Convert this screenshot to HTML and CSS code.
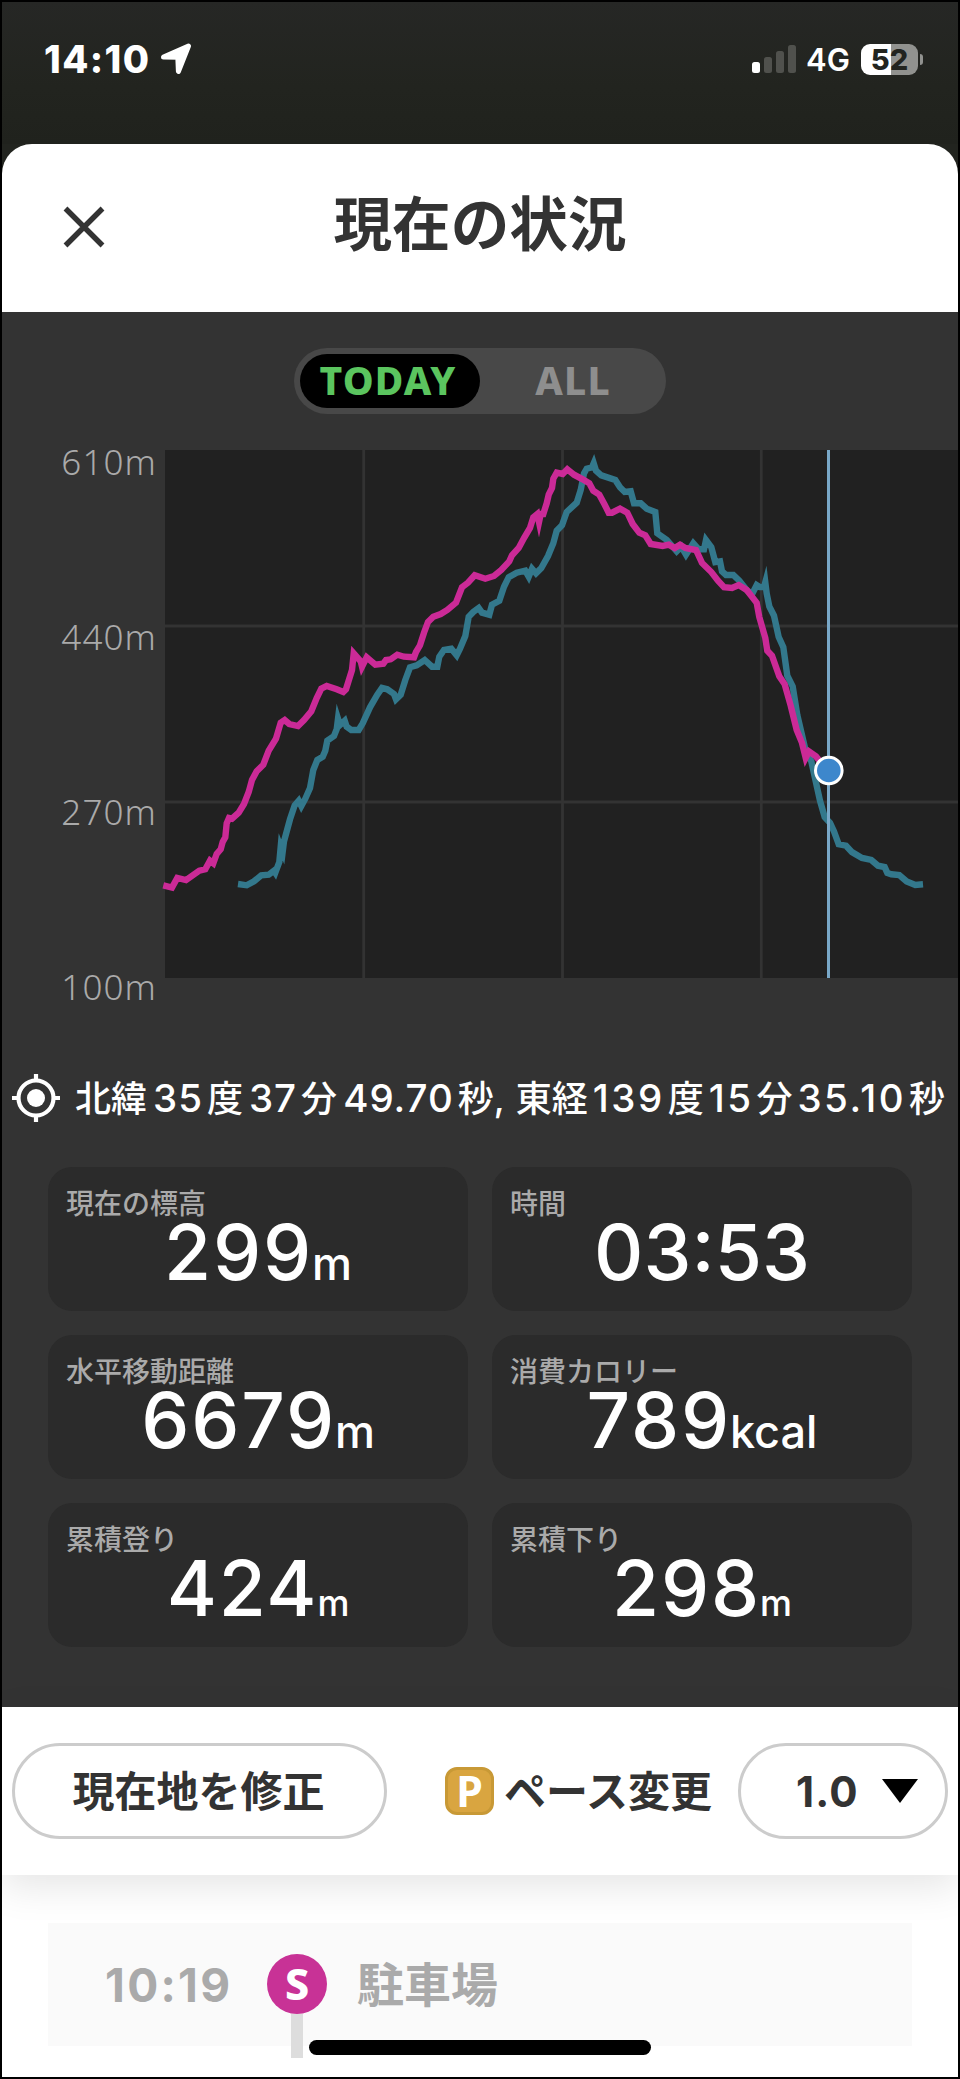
FILE: index.html
```
<!DOCTYPE html>
<html lang="ja">

<head>
    <meta charset="UTF-8" />
    <meta name="viewport" content="width=device-width, initial-scale=1.0" />
    <title>現在の状況</title>
    <link rel="stylesheet" href="styles.css">
</head>

<body>
    <div class="phone">
        <div class="status-bar">
            <span class="clock">14:10</span>
            <svg class="location" width="34" height="34" viewBox="0 0 34 34">
                <path d="M29.5 4 L19.4 29.5 L18.8 15.2 L4.5 15 Z" fill="#fff" stroke="#fff" stroke-width="5" stroke-linejoin="round" />
            </svg>
            <svg class="signal" width="44" height="28" viewBox="0 0 44 28">
                <rect x="0" y="17" width="8" height="11" rx="2.5" fill="#fff" />
                <rect x="12" y="12" width="8" height="16" rx="2.5" fill="#50514d" />
                <rect x="24" y="6" width="8" height="22" rx="2.5" fill="#50514d" />
                <rect x="36" y="0" width="8" height="28" rx="2.5" fill="#50514d" />
            </svg>
            <span class="network">4G</span>
            <div class="battery">52</div>
            <div class="battery-tip"></div>
        </div>

        <div class="sheet">
            <header class="header">
                <svg class="close" width="42" height="42" viewBox="0 0 42 42">
                    <path d="M2.5 2.5 L39.5 39.5 M39.5 2.5 L2.5 39.5" stroke="#333" stroke-width="5.4" fill="none" />
                </svg>
                <h1 class="title">現在の状況</h1>
            </header>

            <main class="panel">
                <div class="toggle">
                    <span class="toggle-item active">TODAY</span>
                    <span class="toggle-item">ALL</span>
                </div>

                <div class="chart">
                    <div class="axis">
                        <span>610m</span>
                        <span>440m</span>
                        <span>270m</span>
                        <span>100m</span>
                    </div>
                    <svg class="plot" width="793" height="528" viewBox="0 0 793 528">
                        <rect width="793" height="528" fill="#212121" />
                        <path d="M0 176 H793 M0 352 H793 M198.7 0 V528 M397.5 0 V528 M596.3 0 V528" stroke="#333" stroke-width="2.8" fill="none" />
                        <!-- planned route -->
                        <polyline class="line plan" points="73,434 81.7,435.3 89,431.3 96.3,425.3 103.7,424.7 109,420.7 110.3,422.7 114.3,412 115.7,396.7 117.7,401.7 119,391.3 125,369.3 129.7,355.3 133.7,350.7 136.3,356 140.3,348.7 145,338 148.3,320 152.3,310 157.7,306.7 160.3,300.7 162.3,290.7 169,286 171.7,279.3 173,268.7 175,275 179.7,270.7 181.7,276.7 186.3,280 193.7,280 197.7,273.3 205,257.3 212.3,244.7 217,238 222.3,239.3 229,244 231,249.3 235.7,244.7 240.3,230 245,217.3 251.7,215.3 259.7,210 267,216.7 272.3,216.7 274.3,206.7 279,200 286.3,198.7 291.7,205.3 295,198.7 300.3,186 303.7,166.7 308.3,162 313.7,158 317,162.7 324.3,164.7 327,154.7 334.3,150.7 339,136.7 343.7,127.3 351.7,122.7 360.3,120.7 363.7,126.7 367,118.7 371,123.3 376.3,118 383,106 388.3,93.3 391.7,80.7 397,75.3 401.7,62 411.7,52.7 415.7,40 419,23.3 421.7,18.7 427,17.3 428.7,13.3 431,20.7 436.3,25.3 450.3,30 455,37.3 459.7,42 465.7,41.3 469,53.3 475.7,53.3 481.7,58.7 490.3,62 492.3,83.3 501.7,90 511.7,101.3 516.3,96.7 521,104.7 528.3,93.3 533.7,99.3 539,99.3 541,90 546.3,97.1 550.3,112.1 555,111.4 557,121.4 561,125 568.3,125 574.3,130.7 581.7,140 587,144.3 591.7,135 595,137.1 599,137.1 600.3,132.3 601.7,143.6 604.3,156.4 609,165.7 613.7,187.1 618.3,197.1 622.3,225.7 627.7,236.4 632.3,265 640.3,299.3 646.3,311.4 655,350.7 659.7,367.1 665,372.9 669,381.4 673.7,394.3 681,395.7 687,402.1 697,407.9 706.3,410 713,415.7 719.7,417.1 722.3,422.9 726.3,424.3 734.3,425 741.7,431.4 750.3,435 758,434.3" />
                        <!-- walked today -->
                        <polyline class="line walked" points="-1.7,435.3 7,437.5 12.3,428 21,430 34.3,420.7 40.3,419.3 45,410.7 48.3,413.3 51.7,404 55.7,399.3 57.7,392 60.3,387.3 61.7,373.3 64,368 67,368.7 73.7,362.7 79,354 83.7,342 87,330 91.7,321.3 98.3,314.7 103.7,300.7 111,288.7 115.7,272.7 119.7,270 124.3,274 133,276 139,270 146.3,261.3 151.7,248 156.3,238.7 161.7,236 171.7,239.3 178.3,242 181,239.3 187,220 188.7,203.3 195.7,211.3 197,216.7 201.7,207.3 210.3,214.7 218.3,213.7 221,210 225.7,209.3 232.3,204.7 239,206.7 249,207.3 251,202 255,195.3 259,182.7 263,172 268.3,166.7 275.7,164 282.3,160 291,152.7 297,137.3 303,132.7 309.7,125.3 320.3,128.7 329,126 336.3,120 344.3,111.3 347,105.3 353.7,98 359,88 365,78 368.3,67.3 372.3,64 374,72 375.7,64 378.3,64 381.7,53.3 383.7,44.7 387,38 388.3,28.7 391.7,22.7 397.7,24 402.3,19.3 409,24.7 417.7,29.3 424.3,33.3 428.3,40.7 434.3,44.7 439.7,54.7 443.7,62.7 447,62.7 455,58.7 462.3,62.7 467.7,74 474.3,82.7 480.3,85.3 485.7,94 497.7,96 503.7,94.7 509.7,98 515,94.7 520.3,98 531,100 537,112.9 546.3,122.1 553,130.7 559,137.1 567,137.9 573.7,135 581.7,140 591.7,152.9 594.3,167.1 600.3,187.9 602.3,200.7 607,205.7 614.3,226.4 619.7,234.3 625.7,255.7 631.7,280 637,292.9 640.7,307.9 644,301.4 651,306.4 658.3,315.7" />
                        <path d="M663.5 0 V528" stroke="#79a8c8" stroke-width="3" />
                        <circle cx="663.8" cy="320.5" r="13.3" fill="#3d87cc" stroke="#fff" stroke-width="3" />
                    </svg>
                </div>

                <div class="position">
                    <svg class="target" width="48" height="48" viewBox="0 0 48 48">
                        <circle cx="24" cy="24" r="17.5" fill="none" stroke="#fff" stroke-width="4.2" />
                        <circle cx="24" cy="24" r="9" fill="#fff" />
                        <path d="M24 0 V6 M24 42 V48 M0 24 H6 M42 24 H48" stroke="#fff" stroke-width="4.2" />
                    </svg>
                    <p class="coords">北緯<b>35</b>度<b>37</b>分<b>49.70</b>秒<i>,</i>東経<b class="wide">139</b>度<b class="wide">15</b>分<b class="wide">35.10</b>秒</p>
                </div>

                <div class="stats">
                    <div class="stat">
                        <p class="stat-label">現在の標高</p>
                        <p class="stat-value">299<small>m</small></p>
                    </div>
                    <div class="stat">
                        <p class="stat-label">時間</p>
                        <p class="stat-value time">03:53</p>
                    </div>
                    <div class="stat">
                        <p class="stat-label">水平移動距離</p>
                        <p class="stat-value">6679<small>m</small></p>
                    </div>
                    <div class="stat">
                        <p class="stat-label">消費カロリー</p>
                        <p class="stat-value">789<small>kcal</small></p>
                    </div>
                    <div class="stat">
                        <p class="stat-label">累積登り</p>
                        <p class="stat-value">424<small class="sm">m</small></p>
                    </div>
                    <div class="stat">
                        <p class="stat-label">累積下り</p>
                        <p class="stat-value">298<small class="sm">m</small></p>
                    </div>
                </div>
            </main>

            <div class="toolbar">
                <button class="btn-fix">現在地を修正</button>
                <span class="pace-icon">P</span>
                <span class="pace-label">ペース変更</span>
                <button class="pace-select">
                    <span>1.0</span>
                    <svg width="36" height="24" viewBox="0 0 36 24">
                        <path d="M0 0 H36 L18 24 Z" fill="#000" />
                    </svg>
                </button>
            </div>

            <div class="timeline">
                <div class="stop">
                    <span class="stop-time">10:19</span>
                    <span class="stop-mark">S</span>
                    <span class="stop-name">駐車場</span>
                </div>
            </div>
        </div>
        <div class="home-bar"></div>
    </div>
</body>

</html>
```

FILE: styles.css
```
* {
    margin: 0;
    padding: 0;
    box-sizing: border-box;
}

body {
    width: 960px;
    font-family: Inter, "Noto Sans CJK JP", sans-serif;
    background-color: #000;
}

.phone {
    position: relative;
    width: 960px;
    height: 2079px;
    border: 2px solid #000;
    background-color: #22241f;
    overflow: hidden;
}

/* status bar */
.status-bar {
    display: flex;
    align-items: center;
    height: 142px;
    padding: 0 35px 28px 42px;
    color: #fff;
    background: linear-gradient(#262725, #22241f 60%, #20221d);
}

.clock {
    width: 108px;
    font-size: 38px;
    font-weight: 800;
    letter-spacing: 1.4px;
    white-space: nowrap;
}

.location {
    margin-left: 7px;
}

.signal {
    margin-left: auto;
}

.network {
    width: 42px;
    margin-left: 10px;
    font-size: 31px;
    font-weight: 600;
}

.battery {
    width: 57px;
    height: 31px;
    margin-left: 13px;
    border-radius: 9px;
    background: linear-gradient(to right, #fff 52%, #91928f 52%);
    color: #22241f;
    font-size: 29px;
    font-weight: 800;
    line-height: 31px;
    text-align: center;
}

.battery-tip {
    width: 3px;
    height: 11px;
    margin-left: 2px;
    border-radius: 0 3px 3px 0;
    background-color: #91928f;
}

/* sheet */
.sheet {
    height: 1933px;
    border-radius: 30px 30px 0 0;
    background-color: #fff;
    overflow: hidden;
}

.header {
    display: flex;
    align-items: center;
    height: 168px;
    padding: 0 0 3px 61px;
}

.title {
    width: 710px;
    padding: 0 2px 3px 0;
    text-align: center;
    font-size: 58.6px;
    line-height: 80px;
    color: #333;
    margin-left: 21px;
}

.panel {
    height: 1395px;
    padding-top: 36px;
    background-color: #333;
}

.toggle {
    display: flex;
    width: 372px;
    height: 66px;
    margin: 0 auto;
    padding: 6px;
    border-radius: 33px;
    background-color: #484848;
}

.toggle-item {
    width: 180px;
    padding-left: 6px;
    border-radius: 27px;
    font-family: "Noto Sans", sans-serif;
    font-size: 39px;
    font-weight: 800;
    line-height: 51px;
    letter-spacing: 1.2px;
    text-align: center;
    color: #8e8e8e;
}

.toggle-item.active {
    padding: 0 4px 0 0;
    background-color: #000;
    color: #5bc55f;
}

/* elevation chart */
.chart {
    display: flex;
    margin-top: 36px;
}

.axis {
    width: 163px;
    height: 572px;
    padding-right: 8px;
    margin-top: -14px;
    text-align: right;
    font-family: "Noto Sans", sans-serif;
    font-size: 35px;
    font-weight: 350;
    letter-spacing: 1.1px;
    color: #aaa;
}

.axis span {
    display: block;
    height: 175px;
    line-height: 51px;
}

.axis span:last-child {
    height: 47px;
}

.line {
    fill: none;
    stroke-width: 6.4;
    stroke-miterlimit: 10;
}

.plan {
    stroke: #33788c;
}

.walked {
    stroke: #cb2a97;
}

.plot {
    overflow: visible;
}

.position {
    display: flex;
    align-items: center;
    height: 60px;
    margin-top: 60px;
    padding-left: 10px;
    color: #fff;
}

.target {
    flex-shrink: 0;
}

.coords {
    margin: -4px 0 0 15px;
    font-family: "Noto Sans CJK JP", sans-serif;
    font-size: 36px;
    font-weight: 500;
    white-space: nowrap;
}

.coords b {
    margin: 0 4px 0 6px;
    font-family: Inter, sans-serif;
    font-size: 38.5px;
    font-weight: 500;
    letter-spacing: 1px;
}

.coords .wide {
    margin: 0 3px 0 5px;
    letter-spacing: 2.5px;
}

.coords i {
    margin: 0 11px 0 0;
    font-family: Inter, sans-serif;
    font-style: normal;
}

.stats {
    display: grid;
    grid-template-columns: 420px 420px;
    gap: 24px;
    justify-content: center;
    margin-top: 39px;
}

.stat {
    height: 144px;
    padding: 18px 18px 0;
    border-radius: 24px;
    background-color: #2b2b2b;
}

.stat-label {
    height: 36px;
    font-size: 28px;
    font-weight: 500;
    line-height: 38px;
    color: #aaa;
}

.stat-value {
    height: 62px;
    line-height: 62px;
    text-align: center;
    font-size: 76.5px;
    font-weight: 500;
    letter-spacing: 1.8px;
    color: #fff;
    white-space: nowrap;
}

.stat-value.time {
    letter-spacing: 0;
}

.stat-value small {
    margin-left: -1px;
    font-size: 45px;
    font-weight: 500;
    letter-spacing: 0;
}

.stat-value .sm {
    font-size: 36px;
}

/* actions */
.toolbar {
    position: relative;
    display: flex;
    align-items: center;
    height: 168px;
    padding: 0 10px;
    background-color: #fff;
    box-shadow: 0 12px 36px rgba(0, 0, 0, 0.1);
    color: #333;
}

.btn-fix,
.pace-select {
    height: 96px;
    border: 3px solid #ccc;
    border-radius: 48px;
    background-color: #fff;
    font-family: Inter, "Noto Sans CJK JP", sans-serif;
    font-size: 42px;
    font-weight: 700;
    color: #333;
}

.btn-fix {
    width: 375px;
    padding: 0 2px 6px 0;
}

.pace-icon {
    width: 49px;
    height: 48px;
    margin-left: 58px;
    border: 3px solid #c89936;
    border-radius: 12px;
    background-color: #d9a540;
    color: #fff;
    font-family: "Open Sans", sans-serif;
    font-size: 43px;
    font-weight: 700;
    line-height: 42px;
    text-align: center;
}

.pace-label {
    margin: -6px 0 0 10px;
    font-size: 42px;
    font-weight: 700;
}

.pace-select {
    display: flex;
    align-items: center;
    justify-content: space-between;
    width: 210px;
    margin-left: auto;
    padding: 0 27px 0 55px;
    letter-spacing: 1.2px;
}

.timeline {
    padding: 48px 46px 0;
}

.stop {
    display: flex;
    align-items: center;
    height: 123px;
    padding-left: 57px;
    background-color: #fafafa;
    color: #aaa;
    font-weight: 700;
}

.stop-time {
    width: 130px;
    font-size: 46px;
    letter-spacing: 2.3px;
    white-space: nowrap;
}

.stop-mark {
    position: relative;
    width: 60px;
    height: 60px;
    margin: -2px 0 0 32px;
    border-radius: 50%;
    background-color: #c83296;
    color: #fff;
    font-family: "Noto Sans", sans-serif;
    font-size: 43px;
    font-weight: 800;
    line-height: 59px;
    text-align: center;
}

.stop-mark::after {
    content: "";
    position: absolute;
    top: 60px;
    left: 24px;
    width: 12px;
    height: 44px;
    background-color: #ddd;
}

.stop-name {
    margin: -6px 0 0 30px;
    font-size: 47px;
}

.home-bar {
    position: absolute;
    bottom: 22px;
    left: 307px;
    width: 342px;
    height: 15px;
    border-radius: 8px;
    background-color: #000;
}
```
